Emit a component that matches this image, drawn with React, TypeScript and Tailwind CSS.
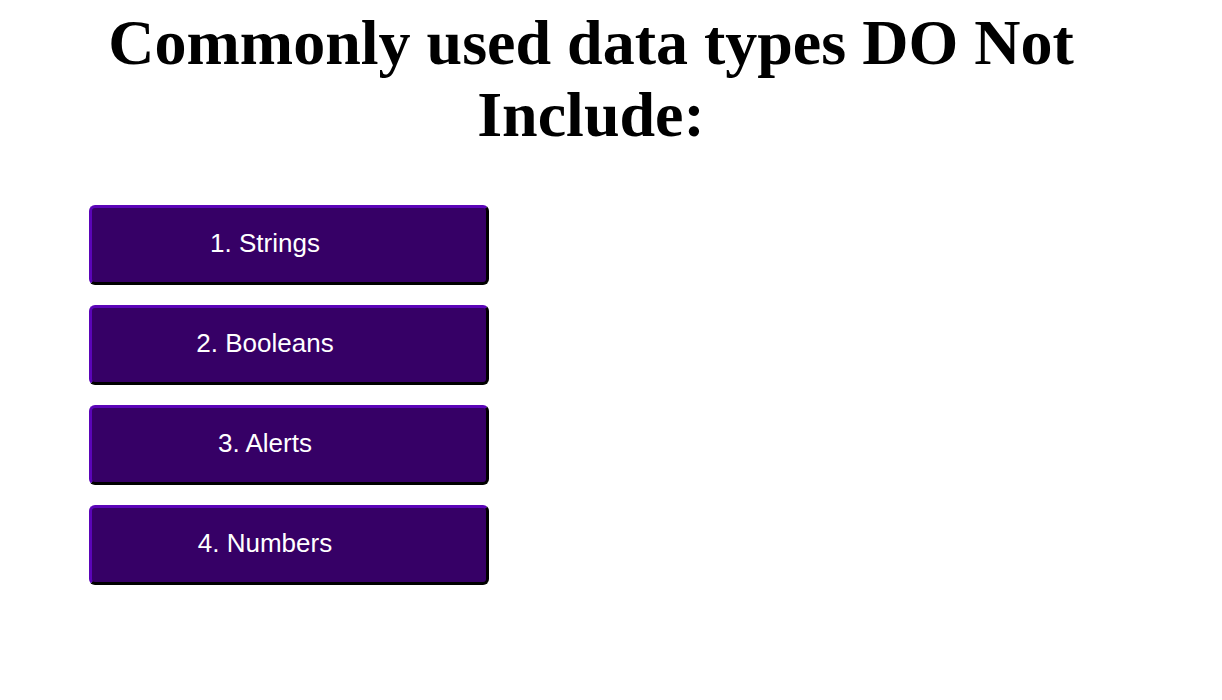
import React from 'react';

const choices = ['1. Strings', '2. Booleans', '3. Alerts', '4. Numbers'];

const App: React.FC = () => {
  return (
    <div className="min-h-[700px] w-full bg-white">
      <div className="w-[1182px] pt-[7px]">
        <h1 className="text-center font-['Liberation_Serif','Times_New_Roman',serif] text-[64px] font-bold leading-[72px] text-black">
          Commonly used data types DO Not
          <br />
          Include:
        </h1>
      </div>
      <div className="mt-[54px] ml-[89px] flex flex-col gap-[20px]">
        {choices.map(choice => (
          <button
            key={choice}
            className="h-[80px] w-[400px] rounded-[6px] border-[3px] border-t-[#5b05b8] border-l-[#5b05b8] border-r-black border-b-black bg-[#360066] pr-[48px] pb-[4px] text-center font-['Liberation_Sans',Arial,sans-serif] text-[26px] text-white"
          >
            {choice}
          </button>
        ))}
      </div>
    </div>
  );
};

export default App;
